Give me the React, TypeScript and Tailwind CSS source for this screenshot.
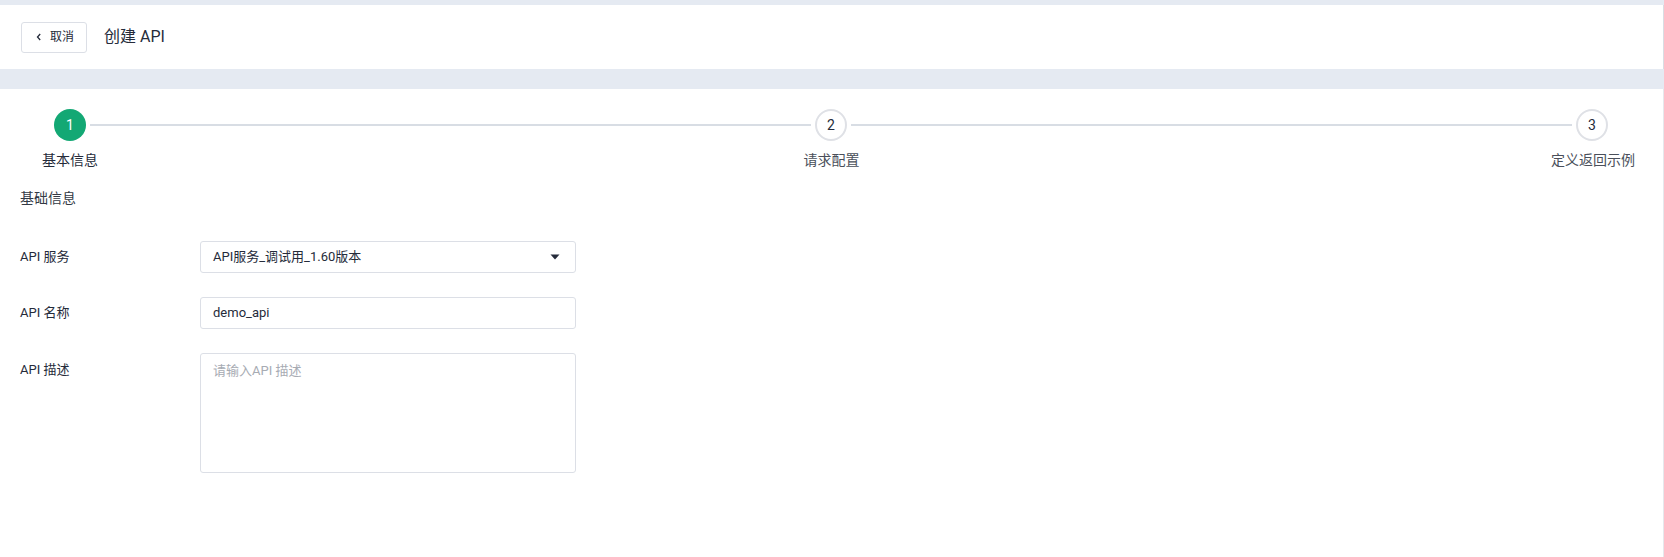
import React from "react";

const font = { fontFamily: '"Roboto", "Noto Sans CJK SC", "Noto Sans", sans-serif' };

function Steps() {
  return (
    <div>
      <div className="flex items-center pl-[54px] pr-[55px]">
        <div className="w-8 h-8 rounded-full bg-[#13a874] flex items-center justify-center text-white text-[14px] shrink-0">1</div>
        <div className="flex-1 h-[2px] bg-[#d8dde4] mx-1" />
        <div className="w-8 h-8 rounded-full border-2 border-[#dfe1e6] bg-white flex items-center justify-center text-[#252b3a] text-[14px] shrink-0">2</div>
        <div className="flex-1 h-[2px] bg-[#d8dde4] mx-1" />
        <div className="w-8 h-8 rounded-full border-2 border-[#dfe1e6] bg-white flex items-center justify-center text-[#252b3a] text-[14px] shrink-0">3</div>
      </div>
      <div className="flex justify-between px-[21px] mt-[9px]">
        <div className="w-[98px] text-center text-[14px] leading-5 text-[#252b3a]">基本信息</div>
        <div className="w-[98px] text-center text-[14px] leading-5 text-[#4a4f5a]">请求配置</div>
        <div className="w-[98px] text-center text-[14px] leading-5 text-[#4a4f5a]">定义返回示例</div>
      </div>
    </div>
  );
}

export default function App() {
  return (
    <div className="w-[1664px] h-[557px] bg-[#e5eaf2] flex flex-col" style={font}>
      <div className="h-[5px] shrink-0" />
      <div className="h-16 shrink-0 bg-white border-r border-[#d9dde3] flex items-center pl-[21px]">
        <button className="w-[66px] h-[31px] border border-[#dcdfe6] rounded-[3px] bg-white flex items-center justify-center gap-[6px] text-[12px] text-[#252b3a]">
          <svg width="10" height="10" viewBox="0 0 10 10" fill="none">
            <path d="M6.2 2 L3.5 5 L6.2 8" stroke="#252b3a" strokeWidth="1.3" />
          </svg>
          <span>取消</span>
        </button>
        <span className="ml-[17px] text-[16px] text-[#252b3a]">创建 API</span>
      </div>
      <div className="h-5 shrink-0" />
      <div className="flex-1 bg-white border-r border-[#e6e8ec] pt-5">
        <Steps />
        <div className="pl-5 mt-[18px] text-[14px] leading-5 text-[#333a45]">基础信息</div>
        <div className="pl-5 mt-[33px] flex flex-col gap-6 text-[13px] text-[#252b3a]">
          <div className="flex items-center">
            <div className="w-[180px]">API 服务</div>
            <div className="w-[376px] h-8 border border-[#dcdfe6] rounded-[3px] flex items-center justify-between pl-3 pr-[15px]">
              <span>API服务_调试用_1.60版本</span>
              <svg width="10" height="6" viewBox="0 0 10 6">
                <path d="M0.5 0.5 L9.5 0.5 L5 5.5 Z" fill="#252b3a" />
              </svg>
            </div>
          </div>
          <div className="flex items-center">
            <div className="w-[180px]">API 名称</div>
            <div className="w-[376px] h-8 border border-[#dcdfe6] rounded-[3px] flex items-center pl-3">
              demo_api
            </div>
          </div>
          <div className="flex items-start">
            <div className="w-[180px] pt-[7px]">API 描述</div>
            <div className="w-[376px] h-[120px] border border-[#dcdfe6] rounded-[3px] pl-3 pt-[7px] text-[#a7abb3]">
              请输入API 描述
            </div>
          </div>
        </div>
      </div>
    </div>
  );
}
